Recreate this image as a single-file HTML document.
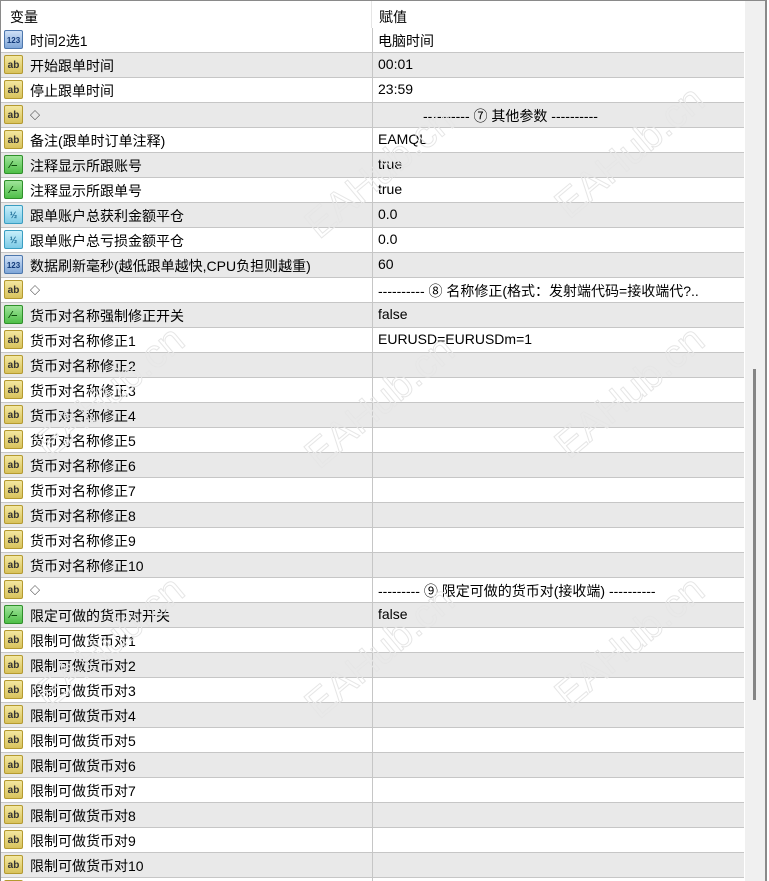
<!DOCTYPE html><html style="height:881px;overflow:hidden"><head><meta charset="utf-8"><style>
body{margin:0;width:769px;height:881px;overflow:hidden;background:#fff;font-family:"Liberation Sans","Noto Sans CJK SC",sans-serif;font-size:14px;color:#000;position:relative}
.frame{position:absolute;left:0;top:0;width:767px;height:881px;border-top:1px solid #8a8a8a;border-left:1px solid #8a8a8a;border-right:2px solid #8a8a8a;box-sizing:border-box}
.hdr{position:absolute;top:1px;left:1px;width:743px;height:27px;background:#fff}
.hdr span{position:absolute;top:6px}
.row{position:absolute;left:1px;width:743px;height:25px;border-bottom:1px solid #c6c6c6;box-sizing:border-box}
.g{background:#e9e9e9}
.row .n{position:absolute;left:29px;top:3px;white-space:nowrap}
.row .v{position:absolute;left:377px;top:3px;white-space:nowrap}
.row .d{position:absolute;left:371px;top:0;width:1px;height:25px;background:#c6c6c6}
.ic{position:absolute;left:3px;top:2px;width:19px;height:19px;border-radius:2px;font-size:10px;font-weight:bold;text-align:center;line-height:19px;box-sizing:border-box}
.ab{background:linear-gradient(#f3e7a0,#d8c25c);border:1px solid #b49a30;color:#333}
.n3{background:linear-gradient(#cfe0f6,#7fa6d8);border:1px solid #4d77ad;color:#123a7a;font-size:8px}
.h{background:linear-gradient(#c7eefa,#7dcbe6);border:1px solid #3a9dc1;color:#1c6c96;font-size:9px}
.b{background:linear-gradient(#9fe49a,#4fbf48);border:1px solid #2f8f2a;color:#0b4a0b}
.sb{position:absolute;left:745px;top:1px;width:20px;height:880px;background:#f0f0f0}
.th{position:absolute;left:753px;top:369px;width:3px;height:331px;background:#858585}
.wm{position:absolute;font-size:40px;color:transparent;-webkit-text-stroke:1px #e6e6e6;transform:rotate(-40deg);white-space:nowrap;font-family:"Liberation Sans",sans-serif}
.dm{font-size:10px}
</style></head><body>
<div class="hdr"><span style="left:9px">变量</span><span style="left:378px">赋值</span><div style="position:absolute;left:370px;top:0;width:1px;height:27px;background:#e5e5e5"></div></div>
<div id="rows"></div>
<div class="sb"></div><div class="th"></div>
<div class="frame"></div>
<script>
var d=[["n3","时间2选1","电脑时间"],["ab","开始跟单时间","00:01"],["ab","停止跟单时间","23:59"],["ab","◇","---------- ⑦ 其他参数 ----------"],["ab","备注(跟单时订单注释)","EAMQL"],["b","注释显示所跟账号","true"],["b","注释显示所跟单号","true"],["h","跟单账户总获利金额平仓","0.0"],["h","跟单账户总亏损金额平仓","0.0"],["n3","数据刷新毫秒(越低跟单越快,CPU负担则越重)","60"],["ab","◇","---------- ⑧ 名称修正(格式：发射端代码=接收端代?.."],["b","货币对名称强制修正开关","false"],["ab","货币对名称修正1","EURUSD=EURUSDm=1"]];
for(var i=2;i<=10;i++)d.push(["ab","货币对名称修正"+i,""]);
d.push(["ab","◇","--------- ⑨ 限定可做的货币对(接收端) ----------"]);
d.push(["b","限定可做的货币对开关","false"]);
for(var i=1;i<=10;i++)d.push(["ab","限制可做货币对"+i,""]);
d.push(["ab","",""]);
var lab={ab:"ab",n3:"123",h:"½",b:"⁄‒"},h="";
d.forEach(function(r,i){var t=28+i*25;var c=i%2?" g":"";var v=r[2];var n=r[1];
if(n=="◇"){n='<span class="dm">◇</span>';if(v.indexOf("⑦")>0)v='<span style="position:relative;left:45px">'+v+'</span>'}
h+='<div class="row'+c+'" style="top:'+t+'px"><div class="ic '+r[0]+'">'+lab[r[0]]+'</div><span class="n">'+n+'</span><div class="d"></div><span class="v">'+v+'</span></div>'});
document.getElementById("rows").innerHTML=h;
</script>
<div class="wm" style="left:290px;top:150px">EAHub.cn</div>
<div class="wm" style="left:540px;top:130px">EAHub.cn</div>
<div class="wm" style="left:20px;top:370px">EAHub.cn</div>
<div class="wm" style="left:290px;top:380px">EAHub.cn</div>
<div class="wm" style="left:540px;top:370px">EAHub.cn</div>
<div class="wm" style="left:20px;top:620px">EAHub.cn</div>
<div class="wm" style="left:290px;top:630px">EAHub.cn</div>
<div class="wm" style="left:540px;top:620px">EAHub.cn</div>
</body></html>
